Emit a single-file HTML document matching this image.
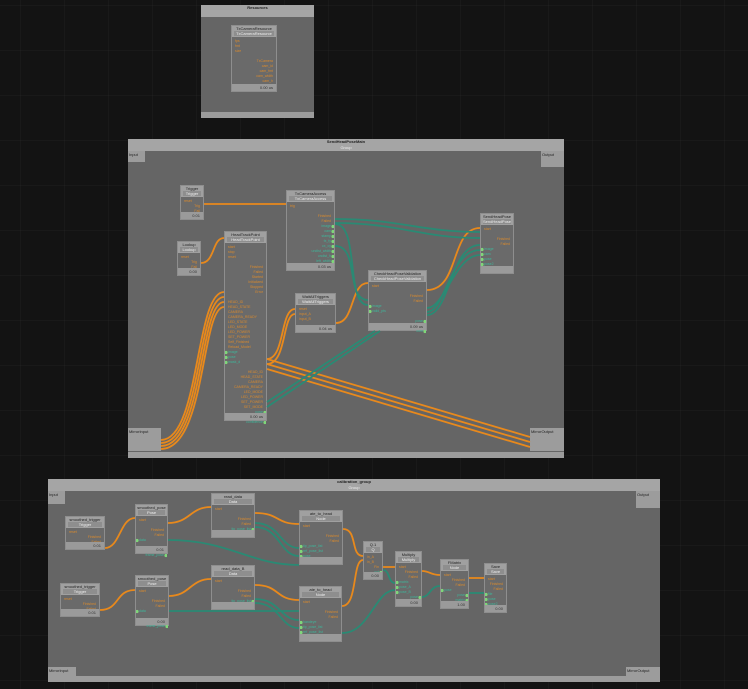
<!DOCTYPE html>
<html><head><meta charset="utf-8"><style>
*{margin:0;padding:0;box-sizing:border-box}
body{width:748px;height:689px;overflow:hidden;background:#131313;position:relative;font-family:"Liberation Sans",sans-serif;
background-image:linear-gradient(90deg,rgba(255,255,255,.022) 1px,transparent 1px),linear-gradient(rgba(255,255,255,.022) 1px,transparent 1px);background-size:44px 45px;background-position:20px 5px}
.g{position:absolute;background:#656565}
.gh{position:absolute;left:0;right:0;top:0;height:12px;background:#a5a5a5;color:#222;font-size:4px;text-align:center;line-height:6px;font-weight:bold}
.gf{position:absolute;left:0;right:0;bottom:0;height:6px;background:#9c9c9c}
.n{position:absolute;background:#6a6a6a;border:1px solid #8e8e8e}
.nh{position:absolute;left:0;right:0;top:0;height:11px;background:#a0a0a0;color:#222;font-size:4px;text-align:center;line-height:5px}
.nh i{display:block;font-style:normal;color:#eee;background:#8e8e8e;margin:0 2px}
.nf{position:absolute;left:0;right:0;bottom:0;height:7px;background:#9a9a9a;color:#333;font-size:4px;text-align:right;padding-right:3px;line-height:7px}
.ps{position:absolute;left:0;right:0;top:13px;font-size:3.5px;line-height:5px;color:#d98a2e}
.ps div{height:5px;white-space:nowrap;overflow:hidden;padding:0 3px}
.ps .r{text-align:right}
.ps .t{color:#3fb59a}
.ps .t.r{background:radial-gradient(circle at calc(100% - 1px) 50%,#7fd67a 1.6px,transparent 1.8px)}
.ps .t.l{background:radial-gradient(circle at 1px 50%,#7fd67a 1.6px,transparent 1.8px)}
.lab{position:absolute;background:#9c9c9c;color:#222;font-size:4px;line-height:5px;padding:1px}
svg{position:absolute;left:0;top:0}
</style></head><body>

<div class="g" style="left:201px;top:5px;width:113px;height:113px"><div class="gh">Resources</div><div class="gf"></div></div>
<div class="n" style="left:231px;top:25px;width:46px;height:67px"><div class="nh">TxCameraResource<i>TxCameraResource</i></div>
<div class="ps"><div>fps</div><div>fmt</div><div>size</div><div></div><div class="r">TxCamera</div><div class="r">cam_id</div><div class="r">cam_fmt</div><div class="r">cam_width</div><div class="r">cam_h</div><div class="r">ok</div></div><div class="nf">0.00 us</div></div>

<div class="g" style="left:128px;top:139px;width:436px;height:319px"><div class="gh">SendHeadPoseMain<br><span style="color:#eee;font-weight:normal">Group</span></div><div class="gf"></div></div>
<div class="lab" style="left:128px;top:151px;width:17px;height:11px">Input</div>
<div class="lab" style="left:541px;top:151px;width:23px;height:16px">Output</div>
<div class="lab" style="left:128px;top:428px;width:33px;height:23px">MirrorInput</div>
<div class="lab" style="left:530px;top:428px;width:34px;height:23px">MirrorOutput</div>

<div class="n" style="left:180px;top:185px;width:24px;height:35px"><div class="nh">Trigger<i>Trigger</i></div><div class="ps"><div>reset</div><div class="r">Trig</div><div class="r">Fail</div></div><div class="nf">0.01</div></div>
<div class="n" style="left:286px;top:190px;width:49px;height:81px"><div class="nh">TxCameraAccess<i>TxCameraAccess</i></div>
<div class="ps"><div>trig</div><div></div><div class="r">Finished</div><div class="r">Failed</div><div class="r t">image</div><div class="r t">cam</div><div class="r t">stamp</div><div class="r t">fx_fy</div><div class="r t">cx_cy</div><div class="r t">undist_width</div><div class="r t">undist_h</div><div class="r t">left_width</div><div class="r t">right_width</div></div><div class="nf">0.03 us</div></div>
<div class="n" style="left:224px;top:231px;width:43px;height:190px"><div class="nh">HeadTrackPoint<i>HeadTrackPoint</i></div>
<div class="ps"><div>start</div><div>stop</div><div>reset</div><div></div><div class="r">Finished</div><div class="r">Failed</div><div class="r">Started</div><div class="r">Initialized</div><div class="r">Stopped</div><div class="r">Error</div><div></div><div>HEAD_ID</div><div>HEAD_STATE</div><div>CAMERA</div><div>CAMERA_READY</div><div>LED_STATE</div><div>LED_MODE</div><div>LED_POWER</div><div>SET_POWER</div><div>Self_Finished</div><div>Reload_Model</div><div class="l t">image</div><div class="l t">pose</div><div class="l t">mask_d</div><div></div><div class="r">HEAD_ID</div><div class="r">HEAD_STATE</div><div class="r">CAMERA</div><div class="r">CAMERA_READY</div><div class="r">LED_MODE</div><div class="r">LED_POWER</div><div class="r">SET_POWER</div><div class="r">SET_MODE</div><div class="r t">pose</div><div class="r t">depth</div><div class="r t">confidence</div></div><div class="nf">0.00 us</div></div>
<div class="n" style="left:177px;top:241px;width:24px;height:35px"><div class="nh">Lookup<i>Lookup</i></div><div class="ps"><div>reset</div><div class="r">Trig</div><div class="r">Fail</div></div><div class="nf">0.00</div></div>
<div class="n" style="left:295px;top:293px;width:41px;height:40px"><div class="nh">WaitAllTriggers<i>WaitAllTriggers</i></div><div class="ps"><div>reset</div><div>input_A</div><div>input_B</div><div></div><div class="r">Finished</div></div><div class="nf">0.04 us</div></div>
<div class="n" style="left:368px;top:270px;width:59px;height:61px"><div class="nh">CheckHeadPoseValidation<i>CheckHeadPoseValidation</i></div><div class="ps"><div>start</div><div></div><div class="r">Finished</div><div class="r">Failed</div><div class="l t">image</div><div class="l t">valid_pts</div><div></div><div class="r t">pose</div><div class="r t">pose2</div><div class="r t">conf</div></div><div class="nf">0.09 us</div></div>
<div class="n" style="left:480px;top:213px;width:34px;height:61px"><div class="nh">SendHeadPose<i>SendHeadPose</i></div><div class="ps"><div>start</div><div></div><div class="r">Finished</div><div class="r">Failed</div><div class="l t">image</div><div class="l t">cam</div><div class="l t">pose</div><div class="l t">pose2</div><div class="l t">stamp</div></div><div class="nf"></div></div>

<div class="g" style="left:48px;top:479px;width:612px;height:203px"><div class="gh">calibration_group<br><span style="color:#eee;font-weight:normal">Group</span></div><div class="gf"></div></div>
<div class="lab" style="left:48px;top:491px;width:17px;height:13px">Input</div>
<div class="lab" style="left:636px;top:491px;width:24px;height:17px">Output</div>
<div class="lab" style="left:48px;top:667px;width:28px;height:9px">MirrorInput</div>
<div class="lab" style="left:626px;top:667px;width:34px;height:9px">MirrorOutput</div>

<div class="n" style="left:65px;top:516px;width:40px;height:34px"><div class="nh">smoothed_trigger<i>Trigger</i></div><div class="ps"><div>reset</div><div class="r">Finished</div><div class="r">Failed</div></div><div class="nf">0.01</div></div>
<div class="n" style="left:135px;top:504px;width:33px;height:50px"><div class="nh">smoothed_pose<i>Pose</i></div><div class="ps"><div>start</div><div></div><div class="r">Finished</div><div class="r">Failed</div><div class="l t">data</div><div></div><div class="r t">pose</div><div class="r t">frame_pose</div></div><div class="nf">0.01</div></div>
<div class="n" style="left:211px;top:493px;width:44px;height:45px"><div class="nh">read_data<i>Data</i></div><div class="ps"><div>start</div><div></div><div class="r">Finished</div><div class="r">Failed</div><div class="r t">tip_pose_list</div><div class="r t">ref_pose_list</div></div><div class="nf"></div></div>
<div class="n" style="left:299px;top:510px;width:44px;height:55px"><div class="nh">ate_to_head<i>Node</i></div><div class="ps"><div>start</div><div></div><div class="r">Finished</div><div class="r">Failed</div><div class="l t">tip_pose_list</div><div class="l t">ref_pose_list</div><div class="l t">pose</div><div class="r t">transform</div></div><div class="nf"></div></div>
<div class="n" style="left:363px;top:541px;width:20px;height:39px"><div class="nh">Q.1<i>Q</i></div><div class="ps"><div>in_A</div><div>in_B</div><div class="r">Fin</div><div class="r t">out</div></div><div class="nf">0.00</div></div>
<div class="n" style="left:395px;top:551px;width:27px;height:56px"><div class="nh">Multiply<i>Multiply</i></div><div class="ps"><div>start</div><div class="r">Finished</div><div class="r">Failed</div><div class="l t">matrix</div><div class="l t">pose_A</div><div class="l t">pose_B</div><div class="r t">pose</div></div><div class="nf">0.00</div></div>
<div class="n" style="left:440px;top:559px;width:29px;height:50px"><div class="nh">FMatrix<i>Node</i></div><div class="ps"><div>start</div><div class="r">Finished</div><div class="r">Failed</div><div class="l t">pose</div><div class="r t">pose</div><div class="r t">matrix</div></div><div class="nf">1.00</div></div>
<div class="n" style="left:484px;top:563px;width:23px;height:50px"><div class="nh">Save<i>Save</i></div><div class="ps"><div>start</div><div class="r">Finished</div><div class="r">Failed</div><div class="l t">file</div><div class="l t">pose</div><div class="l t">pose2</div></div><div class="nf">0.00</div></div>
<div class="n" style="left:60px;top:583px;width:40px;height:34px"><div class="nh">smoothed_trigger<i>Trigger</i></div><div class="ps"><div>reset</div><div class="r">Finished</div><div class="r">Failed</div></div><div class="nf">0.01</div></div>
<div class="n" style="left:135px;top:575px;width:34px;height:51px"><div class="nh">smoothed_pose<i>Pose</i></div><div class="ps"><div>start</div><div></div><div class="r">Finished</div><div class="r">Failed</div><div class="l t">data</div><div></div><div class="r t">pose</div><div class="r t">frame_pose</div></div><div class="nf">0.00</div></div>
<div class="n" style="left:211px;top:565px;width:44px;height:45px"><div class="nh">read_data_B<i>Data</i></div><div class="ps"><div>start</div><div></div><div class="r">Finished</div><div class="r">Failed</div><div class="r t">tip_pose_list</div><div class="r t">ref_pose_list</div></div><div class="nf"></div></div>
<div class="n" style="left:299px;top:586px;width:43px;height:56px"><div class="nh">ate_to_head<i>Node</i></div><div class="ps"><div>start</div><div></div><div class="r">Finished</div><div class="r">Failed</div><div class="l t">handeye</div><div class="l t">tip_pose_list</div><div class="l t">ref_pose_list</div><div class="r t">transform</div></div><div class="nf"></div></div>

<svg width="748" height="689" fill="none" stroke-width="1.8">
<g stroke="#e8891c">
<path d="M204 204 H286"/>
<path d="M201 263 C215 263 212 238 224 238"/>
<path d="M161 440 C200 440 195 292 224 292"/>
<path d="M161 443 C202 443 197 297 224 297"/>
<path d="M161 446 C204 446 199 302 224 302"/>
<path d="M161 449 C206 449 201 307 224 307"/>
<path d="M267 359 C285 359 280 309 295 309"/>
<path d="M267 364 C287 364 282 314 295 314"/>
<path d="M336 323 C355 323 350 283 368 283"/>
<path d="M427 290 C460 290 450 228 480 228"/>
<path d="M267 359 L530 437"/><path d="M267 364 L530 442"/><path d="M267 369 L530 447"/>
<path d="M105 548 C120 548 120 518 135 518"/>
<path d="M168 523 C190 523 190 507 211 507"/>
<path d="M255 513 C280 513 275 524 299 524"/>
<path d="M100 610 C120 610 115 590 135 590"/>
<path d="M169 596 C190 596 190 579 211 579"/>
<path d="M255 585 C280 585 275 600 299 600"/>
<path d="M343 529 C358 529 350 556 363 556"/>
<path d="M342 606 C358 606 352 560 363 560"/>
<path d="M383 567 H395"/><path d="M422 571 C430 571 430 575 440 575"/><path d="M469 578 H484"/>
</g>
<g stroke="#2a8a74">
<path d="M335 219 C400 219 420 232 480 232"/>
<path d="M335 223 C400 223 420 238 480 238"/>
<path d="M335 246 C360 246 345 300 368 300"/>
<path d="M335 224 C360 224 345 305 368 305"/>
<path d="M427 315 C450 315 450 245 480 245"/>
<path d="M427 312 C445 312 450 250 480 250"/>
<path d="M427 308 C445 308 455 255 480 255"/>
<path d="M267 402 L375 331"/><path d="M267 407 L380 331"/>
<path d="M168 540 C230 540 250 565 299 565"/>
<path d="M255 523 C280 523 280 548 299 548"/>
<path d="M255 527 C280 527 280 556 299 556"/>
<path d="M169 611 L299 611"/>
<path d="M255 599 C280 599 280 620 299 620"/>
<path d="M255 603 C280 603 280 628 299 628"/>
<path d="M342 633 C370 633 375 590 395 590"/>
<path d="M383 570 C390 570 388 583 395 583"/>
<path d="M422 597 C430 597 430 586 440 586"/>
<path d="M469 593 H484"/>
</g>
</svg>
</body></html>
